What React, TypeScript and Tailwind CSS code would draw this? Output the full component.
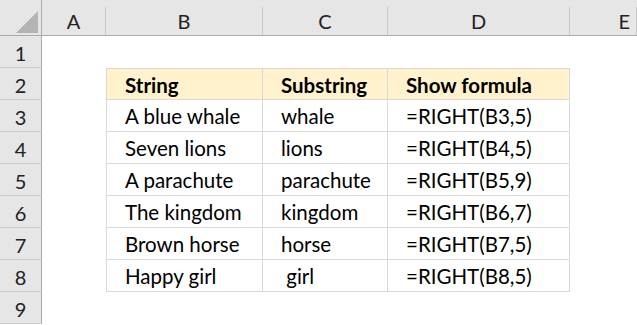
import React from 'react';

const cols = [
  { key: 'A', w: 'w-[64px]' },
  { key: 'B', w: 'w-[157px]' },
  { key: 'C', w: 'w-[125px]' },
  { key: 'D', w: 'w-[182px]' },
  { key: 'E', w: 'flex-1' },
];

const data: string[][] = [
  ['String', 'Substring', 'Show formula'],
  ['A blue whale', 'whale', '=RIGHT(B3,5)'],
  ['Seven lions', 'lions', '=RIGHT(B4,5)'],
  ['A parachute', 'parachute', '=RIGHT(B5,9)'],
  ['The kingdom', 'kingdom', '=RIGHT(B6,7)'],
  ['Brown horse', 'horse', '=RIGHT(B7,5)'],
  ['Happy girl', '\u00a0girl', '=RIGHT(B8,5)'],
];

const tableW = ['w-[157px]', 'w-[125px]', 'w-[182px]'];

const RowHead: React.FC<{ n: number }> = ({ n }) => (
  <div className="w-[42px] h-[32px] shrink-0 bg-[#e6e6e6] border-r border-r-[#ababab] border-b border-b-[#c8c8c8] flex items-center justify-center pt-[2px] text-[20px] text-[#222]">
    {n}
  </div>
);

export default function App() {
  return (
    <div className="w-[637px] h-[325px] bg-white overflow-hidden" style={{ fontFamily: 'Lato, "Noto Sans", sans-serif' }}>
      {/* column headers */}
      <div className="flex h-[36px] bg-[#e6e6e6] border-b border-[#ababab]">
        <div className="w-[42px] h-full shrink-0 border-r border-[#ababab] flex items-end justify-end pr-[3px] pb-[2px]">
          <svg width="22" height="22" viewBox="0 0 22 22">
            <polygon points="22,0 22,22 0,22" fill="#b4b4b4" />
          </svg>
        </div>
        {cols.map((c) => (
          <div key={c.key} className={`${c.w} shrink-0 pt-[7px] h-full`}>
            <div className="h-full border-r border-[#c8c8c8] flex items-center justify-center text-[20px] text-[#222]">
              {c.key === 'E' ? <span className="ml-auto mr-[6px]">E</span> : c.key}
            </div>
          </div>
        ))}
      </div>

      {/* row 1 */}
      <div className="flex">
        <RowHead n={1} />
      </div>

      {/* table rows 2-8 */}
      {data.map((row, i) => (
        <div key={i} className="flex">
          <RowHead n={i + 2} />
          <div className="w-[64px] shrink-0" />
          {row.map((cell, j) => (
            <div
              key={j}
              className={`${tableW[j]} shrink-0 h-[32px] border-r border-b border-[#d9d9d9] ${j === 0 ? 'border-l' : ''} ${i === 0 ? 'border-t bg-[#fff2cc] font-bold' : ''} flex items-center pl-[18px] pt-[2px] text-[20.5px] text-black whitespace-pre`}
            >
              {cell}
            </div>
          ))}
        </div>
      ))}

      {/* row 9 */}
      <div className="flex">
        <RowHead n={9} />
      </div>
    </div>
  );
}
